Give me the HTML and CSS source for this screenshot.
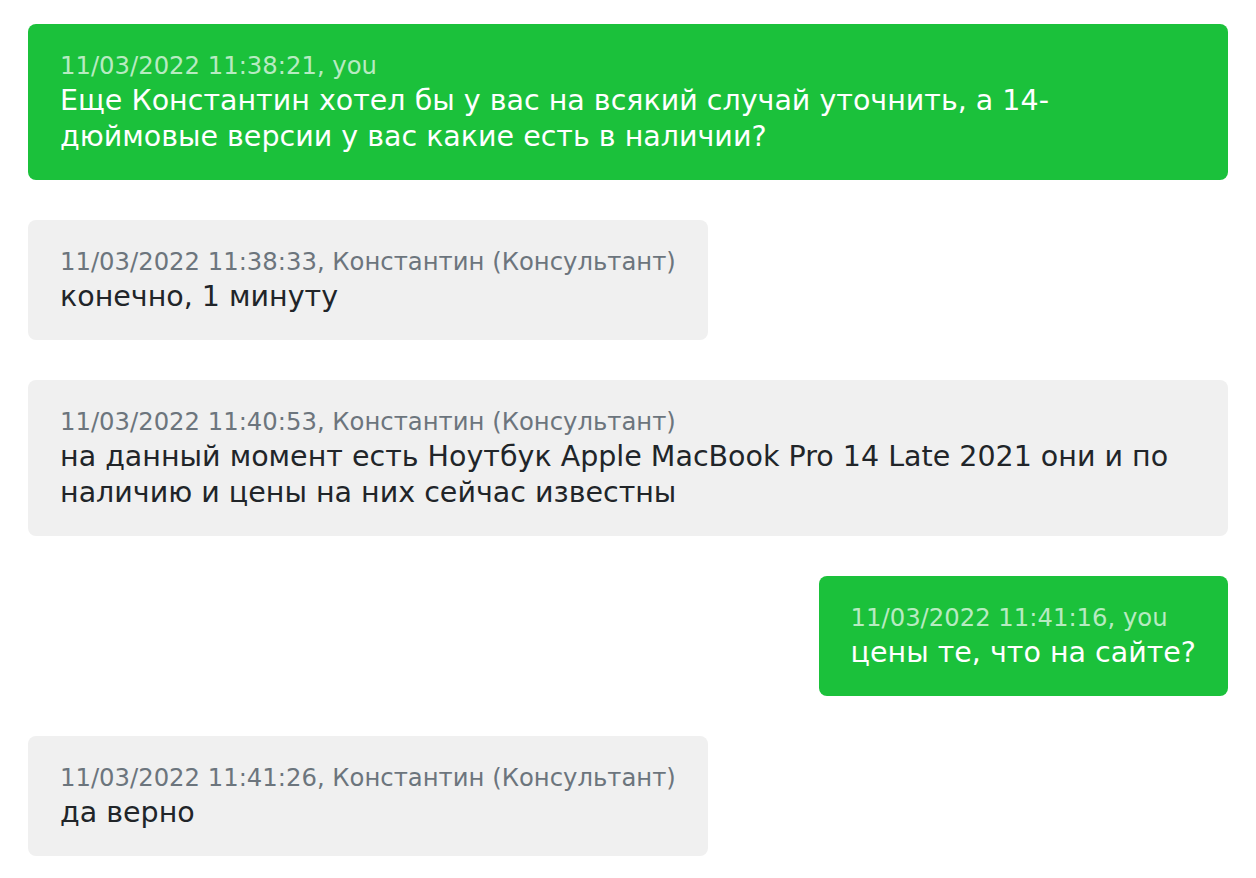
FILE: index.html
```html
<!doctype html>
<html>
  <head>
    <title>Chat</title>
    <link rel="stylesheet" href="styles.css">
  </head>
  <body>
    <div class="chat">
      <div class="message mine">
        <div class="meta">11/03/2022 11:38:21, you</div>
        <div class="text">Еще Константин хотел бы у вас на всякий случай уточнить, а 14-дюймовые версии у вас какие есть в наличии?</div>
      </div>
      <div class="message">
        <div class="meta">11/03/2022 11:38:33, Константин (Консультант)</div>
        <div class="text">конечно, 1 минуту</div>
      </div>
      <div class="message">
        <div class="meta">11/03/2022 11:40:53, Константин (Консультант)</div>
        <div class="text">на данный момент есть Ноутбук Apple MacBook Pro 14 Late 2021 они и по наличию и цены на них сейчас известны</div>
      </div>
      <div class="message mine">
        <div class="meta">11/03/2022 11:41:16, you</div>
        <div class="text">цены те, что на сайте?</div>
      </div>
      <div class="message">
        <div class="meta">11/03/2022 11:41:26, Константин (Консультант)</div>
        <div class="text">да верно</div>
      </div>
    </div>
  </body>
</html>
```

FILE: styles.css
```css
body {
  font-family: "DejaVu Sans", "Liberation Sans", sans-serif;
  margin: 0;
  background: #fff;
}
.chat {
  display: flex;
  flex-direction: column;
  align-items: flex-start;
  gap: 40px;
  padding: 24px 28px;
}
.message {
  background-color: #f0f0f0;
  color: #212529;
  border-radius: 8px;
  padding: 25px 32px;
  max-width: 1200px;
  box-sizing: border-box;
}
.message.mine {
  align-self: flex-end;
  background-color: #1bc13b;
  color: #fff;
}
.meta {
  font-size: 24.3px;
  line-height: 34px;
  color: #6c757d;
}
.mine .meta {
  color: rgba(255, 255, 255, 0.7);
}
.text {
  font-size: 28.5px;
  line-height: 36px;
}
```
